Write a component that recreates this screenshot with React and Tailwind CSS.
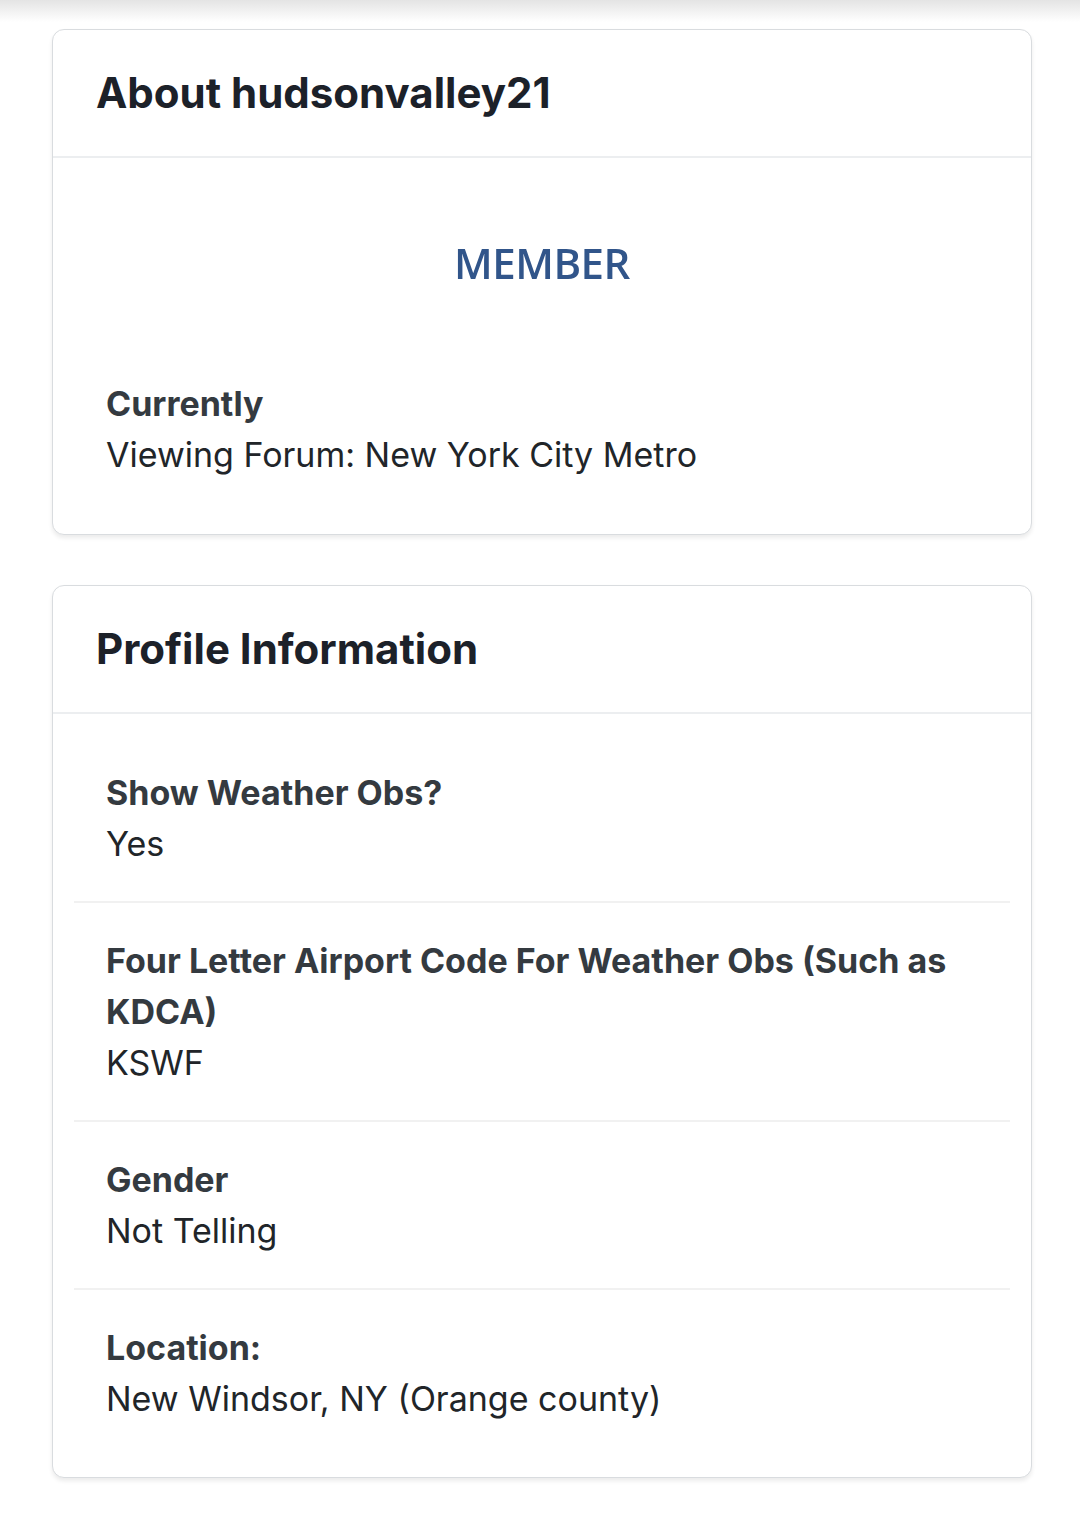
export default function App() {
  const rows = [
    { label: "Show Weather Obs?", value: "Yes" },
    { label: "Four Letter Airport Code For Weather Obs (Such as KDCA)", value: "KSWF" },
    { label: "Gender", value: "Not Telling" },
    { label: "Location:", value: "New Windsor, NY (Orange county)" },
  ];
  return (
    <div className="relative min-h-[1515px] bg-white" style={{ fontFamily: "Inter, 'Noto Sans', sans-serif" }}>
      <div className="absolute left-0 right-0 top-0 h-[22px] bg-gradient-to-b from-[#e4e4e4] to-white" />
      <div className="relative pt-[29px] pl-[52px] pr-[48px] flex flex-col gap-[50px]">
        <div className="rounded-[12px] border border-[#d9dcdf] bg-white shadow-[0_3px_4px_rgba(0,0,0,0.08)]">
          <div className="h-[128px] flex items-center px-[43px] border-b-2 border-[#eceef0]">
            <h2 className="text-[42px] font-bold text-[#1c2129] leading-none">About hudsonvalley21</h2>
          </div>
          <div className="p-[21px]">
            <div className="h-[199px] flex items-center justify-center pb-[32px]">
              <span
                className="text-[42px] font-semibold text-[#31558a] tracking-[-0.5px] blur-[0.7px] leading-none"
                style={{ fontFamily: "'Open Sans', sans-serif" }}
              >
                MEMBER
              </span>
            </div>
            <div className="px-[32px] pt-[0px] pb-[33px] text-[34px] leading-[51px]">
              <div className="font-bold text-[#343a40]">Currently</div>
              <div className="text-[#212529]">Viewing Forum: New York City Metro</div>
            </div>
          </div>
        </div>

        <div className="rounded-[12px] border border-[#d9dcdf] bg-white shadow-[0_3px_4px_rgba(0,0,0,0.08)]">
          <div className="h-[128px] flex items-center px-[43px] border-b-2 border-[#eceef0]">
            <h2 className="text-[42px] font-bold text-[#1c2129] leading-none">Profile Information</h2>
          </div>
          <div className="p-[21px]">
            {rows.map((r, i) => (
              <div
                key={i}
                className={
                  "px-[32px] py-[32px] text-[34px] leading-[51px] " +
                  (i < rows.length - 1 ? "border-b-2 border-[#f1f1f1]" : "")
                }
              >
                <div className="font-bold text-[#343a40]">{r.label}</div>
                <div className="text-[#212529]">{r.value}</div>
              </div>
            ))}
          </div>
        </div>
      </div>
    </div>
  );
}
